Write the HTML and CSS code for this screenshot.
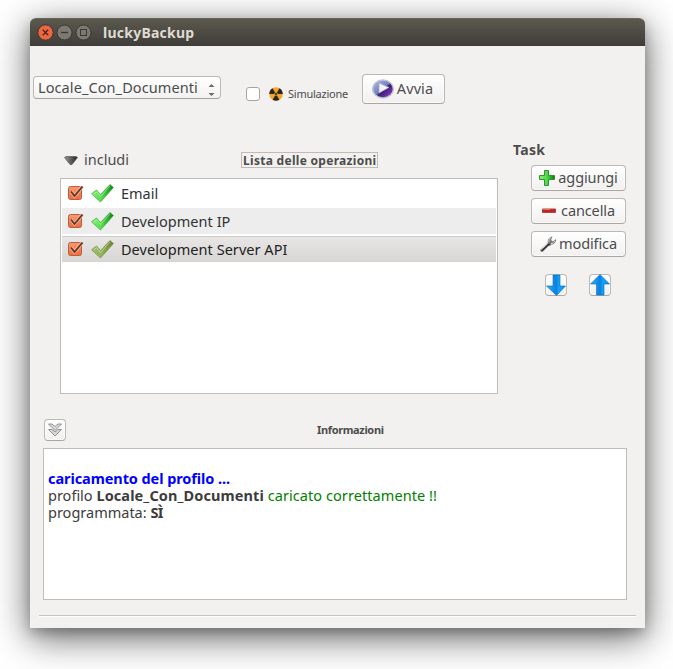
FILE: index.html
```html
<!DOCTYPE html>
<html lang="it">
<head>
<meta charset="utf-8">
<title>luckyBackup</title>
<link rel="stylesheet" href="styles.css">
</head>
<body>
<svg class="defs" width="0" height="0">
  <defs>
    <linearGradient id="green" x1="0" x2="1"><stop offset="0" stop-color="#8af07b"/><stop offset=".5" stop-color="#4bdc48"/><stop offset="1" stop-color="#087e10"/></linearGradient>
    <linearGradient id="olive" x1="0" x2="1"><stop offset="0" stop-color="#a5bd70"/><stop offset=".5" stop-color="#8fb350"/><stop offset="1" stop-color="#6c7c32"/></linearGradient>
    <linearGradient id="orange" x1="0" y1="0" x2="0" y2="1"><stop offset="0" stop-color="#f99a73"/><stop offset="1" stop-color="#ee6a3b"/></linearGradient>
    <linearGradient id="blue" x1="0" x2="1"><stop offset="0" stop-color="#36b5ff"/><stop offset=".5" stop-color="#0a7fdf"/><stop offset=".65" stop-color="#12a3fa"/><stop offset="1" stop-color="#0d92ed"/></linearGradient>
    <linearGradient id="dark" x1="0" x2="1"><stop offset="0" stop-color="#999"/><stop offset="1" stop-color="#222"/></linearGradient>
    <linearGradient id="violet" x1="0" y1="0" x2="1" y2="1"><stop offset="0" stop-color="#b4bfe6"/><stop offset=".48" stop-color="#7180bd"/><stop offset=".56" stop-color="#352070"/><stop offset="1" stop-color="#b23cea"/></linearGradient>
    <symbol id="box" viewBox="0 0 18 18">
      <rect x="1.500" y="2.500" width="13" height="13" rx="2" fill="url(#orange)" stroke="#b95e40"/>
      <path d="M4 7.500l3.500 4.500L15.500 2.500" fill="none" stroke="#ffc2a5" stroke-width="3.200"/>
      <path d="M4 7.500l3.500 4.500L15.500 2.500" fill="none" stroke="#653525" stroke-width="1.900"/>
    </symbol>
    <symbol id="tick" viewBox="0 0 23 19"><path d="M.5 9.800l5-3.800 4 4.500L19 .5l3.500 3L9.500 18z" stroke-width=".8" stroke-linejoin="round"/><path d="M3 9.800l2.500-2 4 4.700L19 2" fill="none" stroke="#fff" stroke-opacity=".4"/></symbol>
  </defs>
</svg>
<main class="window">
  <header class="titlebar">
    <svg width="58" height="20" viewBox="0 0 58 20">
      <circle cx="9.500" cy="9.500" r="7.700" fill="#ed6740" stroke="#39352f"/>
      <path d="M6.800 6.800l5.400 5.400M12.200 6.800l-5.400 5.400" stroke="#50261a" stroke-width="1.400"/>
      <circle cx="28.500" cy="9.500" r="7.500" fill="#7b7970" stroke="#3b3934"/>
      <path d="M25 9.500h7" stroke="#393832" stroke-width="1.300"/>
      <circle cx="47.500" cy="9.500" r="7.500" fill="#7b7970" stroke="#3b3934"/>
      <rect x="44.500" y="6.500" width="6" height="6" fill="none" stroke="#393832"/>
    </svg>
    <h1>luckyBackup</h1>
  </header>

  <section class="toolbar">
    <div class="combo"><span class="t-combo">Locale_Con_Documenti</span>
      <svg width="7" height="14" viewBox="0 0 7 14" fill="#696969"><path d="M0.500 4L3.500 1l3 3zM.5 10l3 3 3-3z"/></svg>
    </div>
    <label class="simulation"><i class="check"></i>
      <svg width="14" height="14" viewBox="0 0 14 14"><circle cx="7" cy="7" r="6.800" fill="#f8a529"/><path d="M7 7L.3 7A6.700 6.700 0 0 1 3.500 1.200zM7 7l3.500-5.800A6.700 6.700 0 0 1 13.700 7zM7 7l3.400 5.800a6.700 6.700 0 0 1-6.800 0z" fill="#292724"/><circle cx="7" cy="7" r="1.500" fill="#292724" stroke="#f8a529" stroke-width=".7"/></svg>
      <span class="t-sim">Simulazione</span>
    </label>
    <button class="run">
      <svg width="22" height="20" viewBox="0 0 22 20"><ellipse cx="11" cy="10" rx="10.300" ry="9" fill="url(#violet)" stroke="#bfc0ce" stroke-width="1.300"/><path d="M7 4l10 4.500L7 14z" fill="#f2f2fa" stroke="#aaa8c7" stroke-width=".7"/></svg>
      <span class="t-run">Avvia</span>
    </button>
  </section>

  <section class="work">
    <div class="tasks">
      <div class="listhead">
        <svg width="14" height="9" viewBox="0 0 14 9"><path d="M.5 1.500L2 .5h10l1.500 1L8 8.500H6z" fill="url(#dark)" stroke="#555" stroke-width=".7"/></svg>
        <span class="t-inc">includi</span>
        <h2><span class="t-list">Lista delle operazioni</span></h2>
      </div>
      <ul class="list">
        <li><svg width="18" height="18"><use href="#box"/></svg><svg class="tick" width="23" height="19"><use href="#tick"/></svg><span class="t-email">Email</span></li>
        <li class="alt"><svg width="18" height="18"><use href="#box"/></svg><svg class="tick" width="23" height="19"><use href="#tick"/></svg><span class="t-ip">Development IP</span></li>
        <li class="selected"><svg width="18" height="18"><use href="#box"/></svg><svg class="tick muted" width="23" height="19"><use href="#tick"/></svg><span class="t-api">Development Server API</span></li>
      </ul>
    </div>
    <aside class="side">
      <h2 class="t-task">Task</h2>
      <div class="actions">
        <button><svg width="18" height="18" viewBox="0 0 18 18"><path d="M6.500 1.500h4v5h6v4h-6v6h-4v-6h-5v-4h5z" fill="url(#green)" stroke="#398e31"/></svg><span class="t-add">aggiungi</span></button>
        <button class="del"><svg width="16" height="18" viewBox="0 0 16 18"><path d="M1.500 7h13v3.500h-13z" fill="#c8201d" stroke="#a6494a"/><path d="M2 7.500h7" stroke="#e86c5d"/></svg><span class="t-del">cancella</span></button>
        <button><svg width="18" height="18" viewBox="0 0 18 18"><path d="M1.500 14.500L9 8c-1-3 1-6 4.500-6.500L12 5l2 1.500L17 4c.5 3.500-2.500 6-6 5.500L4 16.500c-1.500 1-3.500-.5-2.500-2z" fill="#777"/><path d="M2 14.500l6-5M10 7c-.5-2 .5-4 2-4.500M12 8.500c2 0 3.500-1 4-2.500" stroke="#ddd" fill="none"/><path d="M2.500 16l7-6.500 2 .5" stroke="#333" fill="none" stroke-width="1.400"/></svg><span class="t-mod">modifica</span></button>
      </div>
      <div class="arrows">
        <button class="mini"><svg width="20" height="22" viewBox="0 0 20 22"><path d="M7 1h7v11h5.500L10.500 21.500.5 12H7z" fill="url(#blue)" stroke="#0768b5" stroke-width=".6"/></svg></button>
        <button class="mini"><svg width="20" height="22" viewBox="0 0 20 22"><path d="M6.500 21V10H.5L10 .5l9.500 9.500H14v11z" fill="url(#blue)" stroke="#0768b5" stroke-width=".6"/></svg></button>
      </div>
    </aside>
  </section>

  <section class="info">
    <div class="infohead">
      <button class="mini"><svg width="16" height="16" viewBox="0 0 16 16" fill="#d8d8d8" stroke="#888" stroke-width=".9"><path d="M1.500 2h3.500l3 2.500L11 2h3.500L8 8.500zM1.500 7.500H5L8 10l3-2.500h3.500L8 14z"/></svg></button>
      <h2><span class="t-info">Informazioni</span></h2>
    </div>
    <div class="log">
      <p><b class="loading t-load">caricamento del profilo ...</b></p>
      <p><span class="t-prof">profilo</span> <b class="t-name">Locale_Con_Documenti</b> <span class="ok t-ok">caricato correttamente !!</span></p>
      <p><span class="t-sched">programmata:</span> <b class="t-yes">SÌ</b></p>
    </div>
  </section>
  <hr>
</main>
</body>
</html>
```
FILE: styles.css
```css
* { box-sizing: border-box; margin: 0; padding: 0; }
body { width: 673px; height: 669px; padding: 18px 28px 41px 30px; overflow: hidden; background: #fff; color: #4c4c4c; font: 14.500px/17px "Noto Sans", "Open Sans", sans-serif; }
.defs { position: absolute; }
svg { display: block; flex: none; overflow: visible; }
span, b, h1, h2 { white-space: nowrap; }
.window { width: 615px; height: 610px; display: flex; flex-direction: column; background: #f2f1f0; border-radius: 6px 6px 0 0; box-shadow: 0 9px 36px 1px rgba(0,0,0,.6), 0 5px 12px rgba(0,0,0,.2); }
.titlebar { height: 28px; flex: none; display: flex; align-items: center; padding-left: 6px; border-radius: 6px 6px 0 0; border-top: 1px solid #686556; background: linear-gradient(#5b584e, #3e3d38); color: #dfdbd2; }
.titlebar h1 { margin-left: 9px; font-size: 14px; line-height: 20px; letter-spacing: .25px; }
button { display: flex; align-items: center; justify-content: center; border: 1px solid #bcb8b4; border-bottom-color: #aaa6a2; border-radius: 4px; background: linear-gradient(#fff, #f1f0ef); box-shadow: inset 0 0 0 1px #fff8; color: #4c4c4c; font: inherit; }
.toolbar { height: 30px; flex: none; margin-top: 28px; padding-left: 3px; display: flex; align-items: flex-start; }
.combo { width: 188px; height: 23px; margin-top: 2px; padding: 0 5px 0 4px; display: flex; justify-content: space-between; align-items: center; border: 1px solid #bcb8b4; border-bottom-color: #a5a19e; border-radius: 4px; background: linear-gradient(#fff, #f3f2f1); }
.combo svg { margin-top: 4px; }
.t-combo { letter-spacing: .09px; }
.simulation { width: 102px; margin: 12px 0 0 25px; display: flex; align-items: center; font-size: 11px; line-height: 15px; letter-spacing: -.25px; }
.check { width: 14px; height: 14px; margin-right: 9px; flex: none; border: 1px solid #a9a49f; border-radius: 3px; background: #fff; }
.simulation span { margin-left: 5px; }
.run { width: 83px; height: 30px; margin-left: 14px; padding-right: 2px; gap: 3px; }
.run span { margin-top: -2px; letter-spacing: .1px; }
.work { height: 254px; flex: none; margin-top: 36px; padding-left: 30px; display: flex; }
.tasks { width: 438px; }
.listhead { height: 38px; padding: 12px 0 0 4px; display: flex; align-items: flex-start; }
.listhead svg { margin-top: 4px; }
.listhead .t-inc { margin: -1px 0 0 6px; }
.listhead h2 { width: 137px; height: 16px; margin-left: 112px; padding-left: 1px; border: 1px solid #c1bab5; font-size: 12px; line-height: 15px; letter-spacing: .29px; }
.list { height: 216px; padding: 1px; list-style: none; border: 1px solid #c1bcb7; background: #fff; color: #333; }
.list li { height: 26px; margin-bottom: 2px; padding-left: 5px; display: flex; align-items: center; }
.list .alt { background: #ededed; }
.list .selected { background: linear-gradient(#e8e7e6, #d8d6d4); box-shadow: inset 0 1px #d1cfcd; color: #222; }
.list span { margin-left: 7px; }
.t-ip, .t-api { letter-spacing: .04px; }
.tick { margin-left: 6px; fill: url(#green); stroke: #54a94b; }
.muted { fill: url(#olive); stroke: #81965d; }
.side { margin-left: 15px; padding-top: 1px; }
.side h2 { font-size: 14px; line-height: 17px; letter-spacing: .3px; }
.actions { margin: 7px 0 0 18px; display: grid; gap: 7px; }
.actions button { width: 95px; height: 26px; padding-right: 1px; gap: 2px; }
.actions span { margin-top: -2px; letter-spacing: -.12px; }
.actions .del { gap: 4px; }
.arrows { margin: 17px 0 0 32px; display: flex; gap: 22px; }
.mini { width: 22px; height: 22px; border-radius: 4px; }
.info { flex: none; padding: 24px 18px 0 13px; }
.infohead { height: 31px; padding-left: 1px; display: flex; }
.infohead .mini { margin-top: 1px; }
.infohead h2 { margin: 4px 0 0 251px; font-size: 11px; line-height: 15px; letter-spacing: -.35px; }
.log { height: 152px; margin-top: -1px; padding: 21px 4px; border: 1px solid #c1bcb7; background: #fff; color: #3c3c3c; }
.log p { height: 17px; white-space: nowrap; }
.loading { color: #00f; letter-spacing: -.08px; }
.t-name { letter-spacing: .1px; }
.t-yes { letter-spacing: -.6px; }
.ok { color: #008000; letter-spacing: .07px; }
hr { width: 597px; height: 2px; flex: none; margin: 15px 0 0 9px; border: 0; border-top: 1px solid #c6c3c0; background: #fff; }
```
